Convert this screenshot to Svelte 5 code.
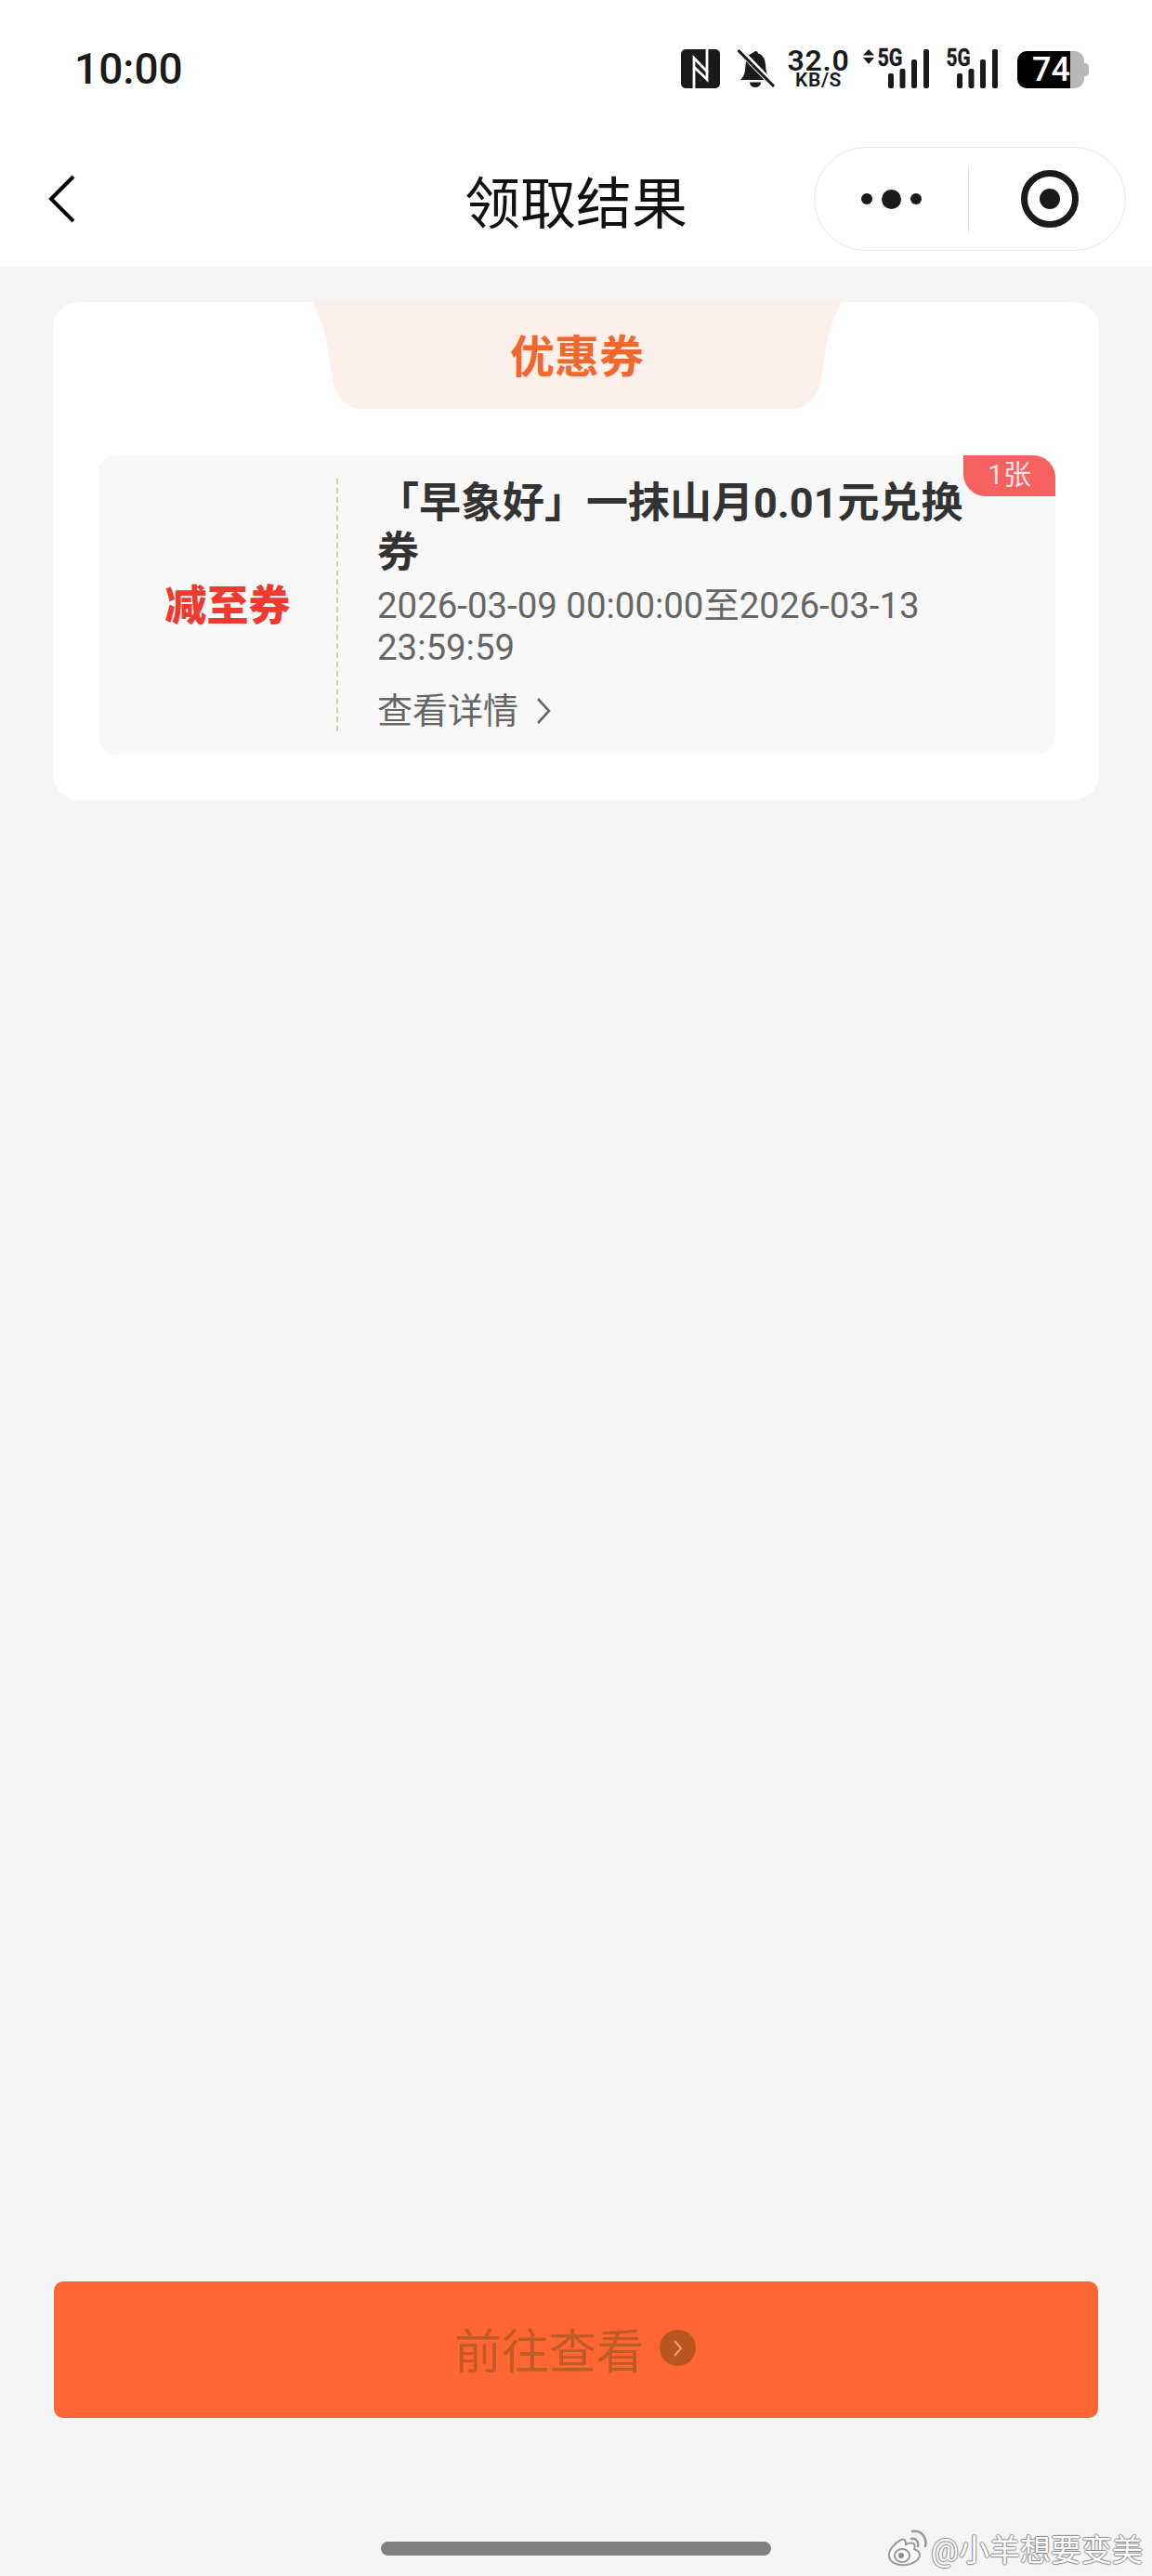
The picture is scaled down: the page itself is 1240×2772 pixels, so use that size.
<script lang="ts">
  const bars = [
    { x: 0, y: 26, h: 16 },
    { x: 12.5, y: 21, h: 21 },
    { x: 25, y: 11, h: 31 },
    { x: 38, y: 0, h: 42 },
  ];
</script>

{#snippet signal(x: number)}
  {#each bars as b}
    <rect x={x + b.x} y={b.y} width="6" height={b.h} rx="2" fill="#1a1a1a" />
  {/each}
{/snippet}

<div class="page">
  <header class="status">
    <span class="time">10:00</span>
    <div class="icons">
      <svg class="nfc" width="42" height="42" viewBox="0 0 42 42">
        <rect width="42" height="42" rx="5" fill="#1a1a1a" />
        <path d="M14 42V9.500L29 25" fill="none" stroke="#fff" stroke-width="2.800" />
        <path d="M28 0V32.500L14.500 19.500" fill="none" stroke="#fff" stroke-width="2.800" />
      </svg>
      <svg class="bell" width="40" height="42" viewBox="0 0 40 42">
        <path d="M19 2c1.800 0 3 1.200 3 2.600C28 6.400 29.500 11 30 17c.4 5 1 10 5 16H3c3.500-3.500 4.500-7 5-11L9.500 8z" fill="#1a1a1a" />
        <path d="M13 35.500h12a6 5.500 0 0 1-12 0z" fill="#1a1a1a" />
        <path d="M1 0L40 40" stroke="#fff" stroke-width="6.500" />
        <path d="M0.500 1L39 40" stroke="#1a1a1a" stroke-width="3.200" />
      </svg>
      <div class="speed">
        <span class="rate">32.0</span>
        <span class="unit">KB/S</span>
      </div>
      <svg class="net-a" width="71" height="42" viewBox="0 0 71 42">
        <path d="M0 6.500L6 0l6 6.500zM0 9h12l-6 7z" fill="#1a1a1a" />
        <text class="five" x="15.500" y="18" textLength="27" lengthAdjust="spacingAndGlyphs">5G</text>
        {@render signal(27)}
      </svg>
      <svg class="net-b" width="56" height="42" viewBox="0 0 56 42">
        <text class="five" x="0.500" y="18" textLength="26" lengthAdjust="spacingAndGlyphs">5G</text>
        {@render signal(12)}
      </svg>
      <div class="battery">
        <span class="level">74</span>
        <i class="nub"></i>
      </div>
    </div>
  </header>

  <nav class="nav">
    <svg class="back" width="30" height="52" viewBox="0 0 30 52">
      <path d="M27 2L3 26l24 24" fill="none" stroke="#000" stroke-width="4" />
    </svg>
    <h1>领取结果</h1>
    <div class="capsule">
      <div class="dots"><i></i><i class="big"></i><i></i></div>
      <div class="sep"></div>
      <div class="target"><i></i></div>
    </div>
  </nav>

  <section class="card">
    <div class="tab">优惠券</div>
    <div class="coupon">
      <div class="kind">减至券</div>
      <div class="info">
        <div class="name">「早象好」一抹山月0.01元兑换券</div>
        <div class="date">2026-03-09 00:00:00至2026-03-13 23:59:59</div>
        <div class="more">
          查看详情
          <svg width="16" height="30" viewBox="0 0 16 30">
            <path d="M2 2l12 13L2 28" fill="none" stroke="#666" stroke-width="2.600" />
          </svg>
        </div>
      </div>
      <span class="count">1张</span>
    </div>
  </section>

  <button class="go">
    前往查看
    <span class="go-icon">
      <svg width="12" height="20" viewBox="0 0 12 20">
        <path d="M2 2l7 8-7 8" fill="none" stroke="#f3a071" stroke-width="2" />
      </svg>
    </span>
  </button>

  <div class="home"></div>

  <div class="mark">
    <svg width="44" height="42" viewBox="0 0 44 42">
      <path d="M16 12C8 16 2 24 3 30c1 7 10 10 18 9 9-1 15-6 15-11 0-4-4-5-6-6 1-3 1-5-1-6-3-1-6 0-8 1 0-3-1-7-5-5z" fill="#fff" stroke="#9a9a9a" stroke-width="2" />
      <ellipse cx="17" cy="29" rx="8" ry="7" fill="#fff" stroke="#9a9a9a" stroke-width="2" />
      <circle cx="16" cy="29" r="3" fill="#8a8a8a" />
      <path d="M27 11c5-1 8 3 7 8M28 3c10-2 16 7 14 16" fill="none" stroke="#9a9a9a" stroke-width="2.500" stroke-linecap="round" />
    </svg>
    <span>@小羊想要变美</span>
  </div>
</div>

<style>
  :global(body) {
    margin: 0;
  }

  .page {
    position: relative;
    display: flex;
    flex-direction: column;
    height: 2772px;
    overflow: hidden;
    background: #f5f5f5;
    font-family: Roboto, 'Noto Sans CJK SC', sans-serif;
  }

  /* status bar */
  .status {
    display: flex;
    justify-content: space-between;
    align-items: flex-start;
    height: 147px;
    box-sizing: border-box;
    padding: 53px 68px 0 80px;
    background: #fff;
    color: #1a1a1a;
  }
  .time {
    font-size: 46px;
    font-weight: 500;
    line-height: 42px;
  }
  .icons {
    display: flex;
    align-items: flex-start;
    height: 42px;
  }
  .icons svg {
    overflow: visible;
  }
  .bell {
    margin-left: 19px;
  }
  .speed {
    display: flex;
    flex-direction: column;
    align-items: center;
    width: 68px;
    margin-left: 13px;
  }
  .rate {
    font-size: 32px;
    line-height: 24px;
    letter-spacing: 0.8px;
    font-weight: 600;
    white-space: nowrap;
  }
  .unit {
    font-size: 21px;
    line-height: 18px;
    letter-spacing: 0.6px;
    font-weight: 600;
    white-space: nowrap;
  }
  .net-a {
    margin-left: 14px;
  }
  .net-b {
    margin-left: 18px;
  }
  .five {
    font-family: Roboto, sans-serif;
    font-size: 25px;
    font-weight: 700;
    fill: #1a1a1a;
    stroke: #1a1a1a;
    stroke-width: 0.4px;
  }
  .battery {
    position: relative;
    display: flex;
    justify-content: flex-end;
    align-items: center;
    box-sizing: border-box;
    width: 72px;
    height: 40px;
    margin: 2px 5px 0 21px;
    padding-right: 15px;
    border-radius: 10px;
    background: linear-gradient(90deg, #000 0 57px, #b8b8b8 57px);
  }
  .level {
    color: #fff;
    font-size: 36px;
    font-weight: 500;
    line-height: 40px;
  }
  .nub {
    position: absolute;
    right: -5px;
    top: 13px;
    width: 5px;
    height: 14px;
    border-radius: 0 4px 4px 0;
    background: #b8b8b8;
  }

  /* navigation */
  .nav {
    display: flex;
    align-items: center;
    position: relative;
    height: 140px;
    background: #fff;
  }
  .back {
    margin: 0 0 6px 52px;
  }
  .nav h1 {
    position: absolute;
    left: 0;
    right: 0;
    margin: -6px 0 0;
    text-align: center;
    font-size: 60px;
    font-weight: 400;
    color: #111;
  }
  .capsule {
    display: flex;
    align-items: center;
    box-sizing: border-box;
    position: relative;
    width: 336px;
    height: 112px;
    margin: -6px 28px 0 auto;
    border: 1.500px solid #e8e8e8;
    border-radius: 56px;
    background: #fff;
  }
  .dots {
    display: flex;
    align-items: center;
    justify-content: center;
    gap: 10px;
    width: 165px;
  }
  .dots i {
    width: 12px;
    height: 12px;
    border-radius: 50%;
    background: #1a1a1a;
  }
  .dots i.big {
    width: 21px;
    height: 21px;
  }
  .sep {
    width: 1px;
    height: 72px;
    background: #e6e6e6;
  }
  .target {
    display: flex;
    align-items: center;
    justify-content: center;
    box-sizing: border-box;
    width: 62px;
    height: 62px;
    margin-left: 56px;
    border: 7px solid #1a1a1a;
    border-radius: 50%;
  }
  .target i {
    width: 22px;
    height: 22px;
    border-radius: 50%;
    background: #1a1a1a;
  }

  /* card */
  .card {
    box-sizing: border-box;
    width: 1126px;
    height: 536px;
    margin: 38px 0 0 57px;
    padding: 0 47px 49px 49px;
    border-radius: 28px;
    background: #fff;
  }
  .tab {
    width: 569px;
    height: 115px;
    margin: 0 auto 50px;
    padding-bottom: 5px;
    box-sizing: border-box;
    display: flex;
    align-items: center;
    justify-content: center;
    background: #fdefe9;
    clip-path: path('M0 0C10 20 16 40 19 67C22 92 28 115 56 115H513C541 115 547 92 550 67C553 40 559 20 569 0Z');
    color: #f0682f;
    font-size: 48px;
    font-weight: 700;
  }
  .coupon {
    position: relative;
    display: flex;
    box-sizing: border-box;
    height: 322px;
    padding: 25px 0;
    border-radius: 20px;
    background: #f8f8f8;
  }
  .kind {
    display: flex;
    align-items: center;
    justify-content: center;
    box-sizing: border-box;
    width: 258px;
    padding: 0 0 6px 22px;
    border-right: 2px dashed #d2cf9f;
    color: #ee3b32;
    font-size: 45px;
    font-weight: 900;
  }
  .info {
    width: 640px;
    margin-left: 42px;
  }
  .name {
    color: #333;
    font-size: 45px;
    font-weight: 700;
    line-height: 53px;
  }
  .date {
    margin-top: 8px;
    color: #666;
    font-size: 38.400px;
    line-height: 45px;
  }
  .more {
    display: flex;
    align-items: center;
    gap: 19px;
    margin-top: 24px;
    color: #666;
    font-size: 38px;
    line-height: 44px;
  }
  .count {
    position: absolute;
    top: 0;
    right: 0;
    width: 99px;
    height: 44px;
    border-radius: 0 24px 0 24px;
    background: #f66060;
    color: #fde3e1;
    font-size: 30px;
    line-height: 42px;
    text-align: center;
  }

  /* action button */
  .go {
    display: flex;
    align-items: center;
    justify-content: center;
    gap: 17px;
    box-sizing: border-box;
    width: 1124px;
    height: 147px;
    margin: auto 0 0 58px;
    padding: 0 2px 4px 0;
    border: 0;
    border-radius: 10px;
    background: #ff6633;
    color: #c05a26;
    font-family: inherit;
    font-size: 51px;
  }
  .go-icon {
    display: flex;
    align-items: center;
    justify-content: center;
    width: 39px;
    height: 39px;
    border-radius: 50%;
    background: #b9551f;
  }
  .home {
    width: 420px;
    height: 15px;
    margin: 133px 0 22px 410px;
    border-radius: 8px;
    background: #808080;
  }

  /* watermark sits over the page */
  .mark {
    position: absolute;
    right: 10px;
    bottom: 6px;
    display: flex;
    align-items: center;
    gap: 4px;
    color: #fff;
    font-size: 33px;
    text-shadow:
      1px 0 1px #8a8a8a,
      -1px 0 1px #8a8a8a,
      0 1px 1px #8a8a8a,
      0 -1px 1px #8a8a8a;
  }
</style>
